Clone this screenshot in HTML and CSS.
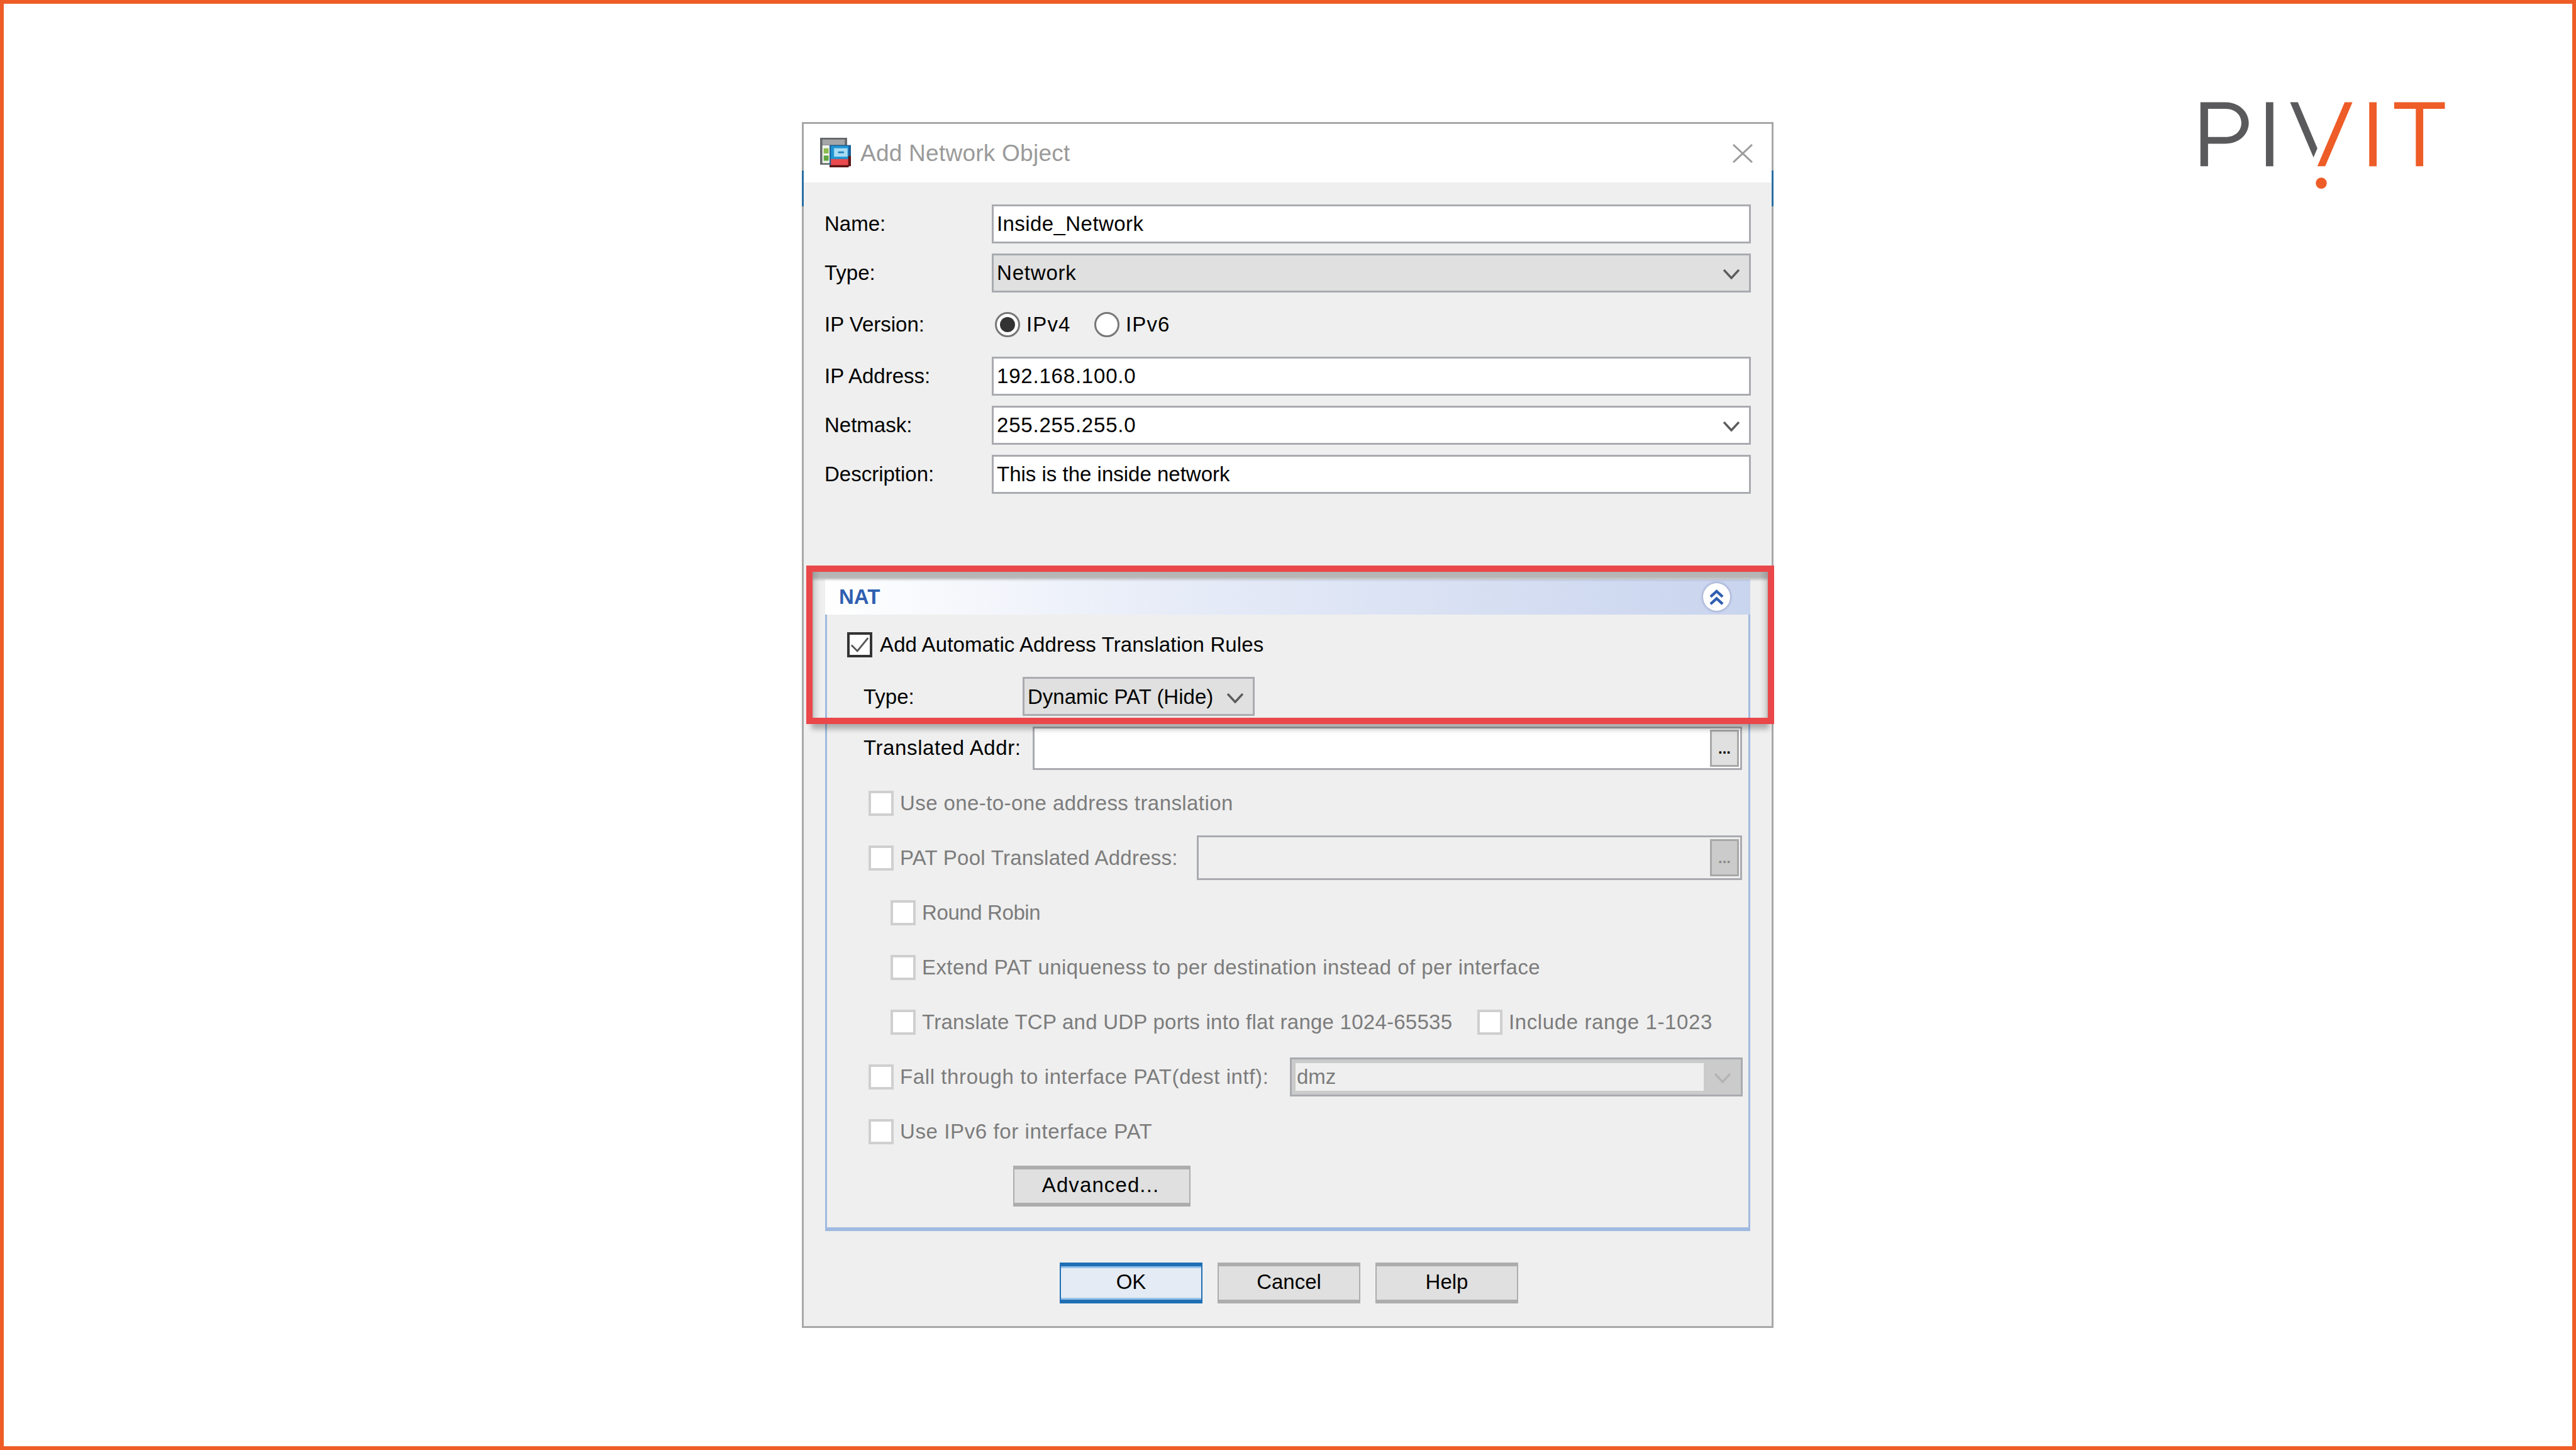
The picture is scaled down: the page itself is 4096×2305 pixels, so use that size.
FILE: index.html
```html
<!DOCTYPE html>
<html lang="en">
<head>
<meta charset="utf-8">
<title>Add Network Object</title>
<link rel="stylesheet" href="styles.css">
</head>
<body>
<div class="page">
  <div class="dialog">
    <div class="titlebar">
      <svg class="app-icon" viewBox="0 0 137 203" preserveAspectRatio="none">
        <rect x="0" y="0" width="120" height="185" fill="#63676a"/>
        <rect x="10" y="12" width="100" height="38" fill="#a4a6a8"/>
        <rect x="10" y="52" width="34" height="122" fill="#f2f5ee"/>
        <rect x="16" y="72" width="22" height="36" fill="#8dbb4f"/>
        <rect x="16" y="122" width="22" height="36" fill="#5fa63e"/>
        <rect x="42" y="50" width="95" height="145" fill="#1b5f98"/>
        <rect x="48" y="56" width="78" height="92" fill="#1f95d3"/>
        <rect x="62" y="72" width="60" height="58" fill="#a9dcf3"/>
        <rect x="80" y="94" width="26" height="12" fill="#1f7fbc"/>
        <rect x="48" y="146" width="78" height="44" fill="#ea4a4d"/>
        <rect x="42" y="188" width="85" height="15" fill="#5e1414"/>
        <rect x="125" y="125" width="12" height="70" fill="#5e1414"/>
      </svg>
      <span class="title-text ls1">Add Network Object</span>
      <svg class="close-icon" viewBox="0 0 32 30"><path d="M1 1 31 29M31 1 1 29"/></svg>
    </div>

    <div class="form">
      <div class="row">
        <span class="label">Name:</span>
        <div class="field"><span class="ls2">Inside_Network</span></div>
      </div>
      <div class="row">
        <span class="label">Type:</span>
        <div class="field select"><span class="ls4">Network</span>
          <svg class="chev" viewBox="0 0 26 16"><path d="M1 1 13 14 25 1"/></svg>
        </div>
      </div>
      <div class="row row-radio">
        <span class="label">IP Version:</span>
        <div class="radio-opt"><span class="radio on"></span><span class="ls5">IPv4</span></div>
        <div class="radio-opt"><span class="radio"></span><span class="ls5">IPv6</span></div>
      </div>
      <div class="row">
        <span class="label">IP Address:</span>
        <div class="field"><span class="ls4">192.168.100.0</span></div>
      </div>
      <div class="row">
        <span class="label">Netmask:</span>
        <div class="field"><span class="ls4">255.255.255.0</span>
          <svg class="chev" viewBox="0 0 26 16"><path d="M1 1 13 14 25 1"/></svg>
        </div>
      </div>
      <div class="row">
        <span class="label">Description:</span>
        <div class="field"><span>This is the inside network</span></div>
      </div>
    </div>

    <section class="nat">
      <header class="nat-head">
        <span class="nat-title">NAT</span>
        <span class="collapse">
          <svg viewBox="0 0 24 26"><path d="M2 12 12 3 22 12M2 24 12 15 22 24"/></svg>
        </span>
      </header>
      <div class="nat-body">
        <div class="auto-row">
          <span class="check dark">
            <svg viewBox="0 0 34 33"><path d="M3 17 13 27 31 5"/></svg>
          </span>
          <span class="ls0">Add Automatic Address Translation Rules</span>
        </div>
        <div class="type-row">
          <span class="nat-label">Type:</span>
          <div class="field select nat-select"><span>Dynamic PAT (Hide)</span>
            <svg class="chev" viewBox="0 0 26 16"><path d="M1 1 13 14 25 1"/></svg>
          </div>
        </div>
        <div class="trans-row">
          <span class="trans-label ls3">Translated Addr:</span>
          <div class="field trans-field">
            <span class="browse">...</span>
          </div>
        </div>

        <div class="opt-row">
          <span class="check"></span><span class="ls2">Use one-to-one address translation</span>
        </div>
        <div class="opt-row">
          <span class="check"></span><span class="ls1">PAT Pool Translated Address:</span>
          <div class="field off pool-field"><span class="browse off">...</span></div>
        </div>
        <div class="opt-row sub">
          <span class="check"></span><span class="lsn">Round Robin</span>
        </div>
        <div class="opt-row sub">
          <span class="check"></span><span class="ls2">Extend PAT uniqueness to per destination instead of per interface</span>
        </div>
        <div class="opt-row sub">
          <span class="check"></span><span class="ls1">Translate TCP and UDP ports into flat range 1024-65535</span>
          <div class="include"><span class="check"></span><span class="ls3">Include range 1-1023</span></div>
        </div>
        <div class="opt-row">
          <span class="check"></span><span class="ls3">Fall through to interface PAT(dest intf):</span>
          <div class="field select dest-select">
            <span class="dest-value">dmz</span>
            <svg class="chev muted" viewBox="0 0 26 16"><path d="M1 1 13 14 25 1"/></svg>
          </div>
        </div>
        <div class="opt-row">
          <span class="check"></span><span class="ls3">Use IPv6 for interface PAT</span>
        </div>
        <button class="btn advanced" type="button">Advanced...</button>
      </div>
    </section>

    <footer class="actions">
      <button class="btn primary" type="button">OK</button>
      <button class="btn" type="button">Cancel</button>
      <button class="btn" type="button">Help</button>
    </footer>

    <div class="highlight"></div>
  </div>

  <svg class="logo" viewBox="0 0 1568 1200" preserveAspectRatio="none" role="img" aria-label="PIVIT">
    <path class="logo-gray" fill-rule="evenodd" d="M222 202H350C420 202 470 290 470 395C470 500 420 588 350 588H261V798H222ZM261 264V526H350C400 526 432 470 432 395C432 320 400 264 350 264Z"/>
    <rect class="logo-gray" x="558" y="202" width="38" height="596"/>
    <path class="logo-gray" d="M682 202H722L822 630 802 715Z"/>
    <path class="logo-orange" d="M962 202H1002L862 798H822Z"/>
    <rect class="logo-orange" x="1088" y="202" width="38" height="596"/>
    <path class="logo-orange" d="M1216 202H1476V264H1365V798H1327V264H1216Z"/>
    <ellipse class="logo-orange" cx="842" cy="955" rx="28" ry="52"/>
  </svg>
</div>
</body>
</html>
```
FILE: styles.css
```css
* { box-sizing: border-box; }
html, body { margin: 0; padding: 0; background: #fff; }
body { font-family: "Liberation Sans", Arial, sans-serif; font-size: 33px; color: #000; }

.ls0 { letter-spacing: .13px; }
.ls1 { letter-spacing: .25px; }
.ls2 { letter-spacing: .42px; }
.ls3 { letter-spacing: .6px; }
.ls4 { letter-spacing: .8px; }
.ls5 { letter-spacing: 1.1px; }
.lsn { letter-spacing: -.4px; }

.page {
  width: 4096px;
  height: 2305px;
  border: 6px solid #ee5c27;
  background: #fff;
  display: flex;
  align-items: flex-start;
  overflow: hidden;
}

.dialog {
  position: relative;
  flex: none;
  width: 1545px;
  height: 1917px;
  margin: 188px 0 0 1269px;
  border: 3px solid #a8a8a8;
  background: #efefef;
}
.dialog::before, .dialog::after {
  content: "";
  position: absolute;
  top: 74px;
  width: 3px;
  height: 57px;
  background: #2a6ea3;
}
.dialog::before { left: -3px; }
.dialog::after { right: -3px; }

.titlebar {
  height: 93px;
  background: #fff;
  display: flex;
  align-items: center;
  padding: 0 30px 0 26px;
}
.app-icon { width: 49px; height: 47px; flex: none; margin-top: -2px; }
.title-text { margin-left: 15px; font-size: 37px; color: #9a9a9a; }
.close-icon { margin-left: auto; width: 32px; height: 30px; }
.close-icon path { fill: none; stroke: #9c9c9c; stroke-width: 3; }

.form { padding: 35px 33px 0 33px; }
.row { display: flex; align-items: center; height: 62px; margin-bottom: 16px; }
.row-radio { height: 70px; }
.label { flex: none; width: 266px; }

.field {
  flex: 1;
  height: 100%;
  border: 3px solid #a9abb0;
  background: #fff;
  display: flex;
  align-items: center;
  padding-left: 5px;
}
.select { background: #e0e0e0; }
.chev { flex: none; margin-left: auto; margin-right: 15px; width: 26px; height: 16px; margin-top: 4px; }
.chev path { fill: none; stroke: #5c5c5c; stroke-width: 3.5; }
.chev.muted { margin-right: 16px; }
.chev.muted path { stroke: #b4b4b4; }

.radio-opt { display: flex; align-items: center; width: 158px; margin-left: 5px; }
.radio-opt + .radio-opt { margin-left: 0; }
.radio {
  width: 40px;
  height: 40px;
  margin-right: 10px;
  border: 3px solid #777;
  border-radius: 50%;
  background: #fff;
  display: flex;
  align-items: center;
  justify-content: center;
}
.radio.on::before {
  content: "";
  width: 24px;
  height: 24px;
  border-radius: 50%;
  background: #333;
}

.nat {
  width: 1471px;
  height: 1036px;
  margin: 136px 0 0 34px;
  border: solid #a0bae0;
  border-width: 0 3px 6px 3px;
}
.nat-head {
  height: 56px;
  margin: 0 -3px;
  background: linear-gradient(90deg, #fff 0%, #e8edf8 35%, #c9d4ee 100%);
  display: flex;
  align-items: center;
  padding: 0 32px 0 22px;
}
.nat-title { font-weight: 700; color: #2f5fb0; }
.collapse {
  margin-left: auto;
  width: 43px;
  height: 44px;
  border-radius: 50%;
  background: #fff;
  box-shadow: 0 0 3px 2px #a8b4d8;
  display: flex;
  align-items: center;
  justify-content: center;
}
.collapse svg { width: 23px; height: 25px; }
.collapse path { fill: none; stroke: #2f5fb0; stroke-width: 4.5; }

.nat-body { padding: 28px 10px 0 0; }

.check {
  flex: none;
  width: 40px;
  height: 40px;
  margin-right: 10px;
  border: 4px solid #cfcfcf;
  background: #fff;
  display: block;
}
.check.dark { border-color: #333; margin-right: 12px; }
.check svg { display: block; width: 100%; height: 100%; }
.check path { fill: none; stroke: #555; stroke-width: 3; }

.auto-row { display: flex; align-items: center; height: 39px; padding-left: 32px; }
.type-row { display: flex; align-items: center; height: 62px; margin-top: 32px; padding-left: 58px; }
.nat-label { flex: none; width: 253px; padding-top: 2px; }
.nat-select { flex: none; width: 369px; padding-top: 2px; }
.trans-row { display: flex; align-items: center; height: 69px; margin-top: 17px; padding-left: 58px; }
.trans-label { flex: none; width: 269px; padding-bottom: 2px; }
.trans-field { justify-content: flex-end; padding: 0 2px 0 0; }

.browse {
  flex: none;
  width: 46px;
  height: 59px;
  border: 3px solid #a8a8a8;
  background: #e0e0e0;
  display: flex;
  align-items: center;
  justify-content: center;
  font-size: 24px;
  font-weight: 700;
  line-height: 1;
}
.browse.off { background: #cbcbcb; color: #888; }

.opt-row {
  display: flex;
  align-items: center;
  height: 87px;
  padding-left: 66px;
  color: #7c7c7c;
}
.trans-row + .opt-row { margin-top: 9px; }
.opt-row.sub { padding-left: 101px; }
.off { background: #efefef; }
.pool-field { flex: none; height: 71px; width: 867px; margin-left: auto; justify-content: flex-end; padding: 0 2px 0 0; }
.dest-select {
  flex: none;
  height: 62px;
  width: 720px;
  margin: 0 -1px 0 auto;
  padding-left: 6px;
  background: #cbcbcb;
}
.dest-value {
  flex: none;
  display: flex;
  align-items: center;
  width: 649px;
  height: 44px;
  padding-left: 2px;
  background: #efefef;
}
.include { display: flex; align-items: center; width: 421px; margin-left: auto; }

.btn {
  display: block;
  font: inherit;
  color: #000;
  width: 227px;
  height: 65px;
  padding: 0 0 3px;
  background: #e0e0e0;
  border: 2px solid #adadad;
  border-width: 6px 2px;
}
.advanced { width: 282px; margin: 11px 0 0 296px; letter-spacing: 1.1px; padding-right: 4px; }
.actions { display: flex; justify-content: center; gap: 24px; margin-top: 50px; padding-left: 4px; }
.primary {
  border-color: #1f6fb5;
  background: #e4ebf4;
  box-shadow: inset 0 3px 0 #99c4e8, inset 0 -3px 0 #99c4e8;
}

.highlight {
  position: absolute;
  left: 4px;
  top: 702px;
  width: 1539px;
  height: 252px;
  border: 10px solid #ea474a;
  box-shadow:
    inset 0 12px 4px rgba(0, 0, 0, .24),
    inset 12px 0 8px -6px rgba(0, 0, 0, .14),
    inset -12px 0 8px -6px rgba(0, 0, 0, .14),
    0 16px 8px -8px rgba(0, 0, 0, .28);
}

.logo { flex: none; width: 486px; height: 205px; margin: 122px 0 0 610px; }
.logo-gray { fill: #5a5a5c; }
.logo-orange { fill: #ee5c27; }
```
